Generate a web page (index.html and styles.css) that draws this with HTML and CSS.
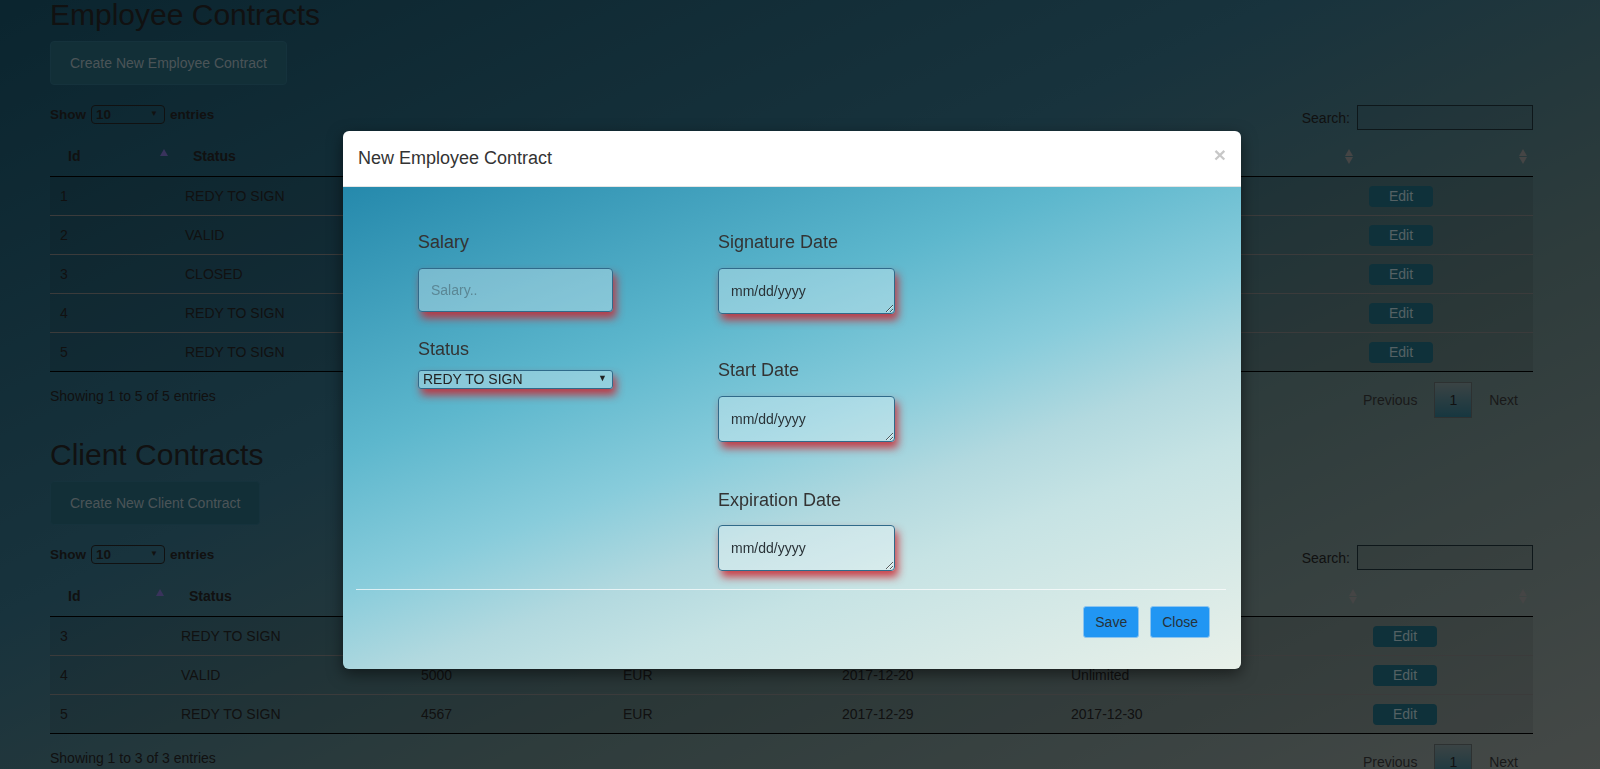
FILE: index.html
```html
<!DOCTYPE html>
<html lang="en">
<head>
<meta charset="utf-8">
<title>Contracts</title>
<link rel="stylesheet" href="styles.css">
</head>
<body>
<div class="page">
  <section class="block">
    <h2 class="block-title first">Employee Contracts</h2>
    <button class="btn-create" type="button">Create New Employee Contract</button>
    <div class="dt-top">
      <label class="dt-length">Show <span class="len-select"><select><option>10</option><option>25</option><option>50</option></select></span> entries</label>
      <label class="dt-filter">Search: <input type="search"></label>
    </div>
    <table class="dt">
      <colgroup><col style="width:125px"><col style="width:240px"><col style="width:200px"><col style="width:240px"><col style="width:245px"><col style="width:259px"><col style="width:174px"></colgroup>
      <thead>
        <tr><th class="sort-asc">Id</th><th class="sort-both">Status</th><th class="sort-both">Salary</th><th class="sort-both">Signature Date</th><th class="sort-both">Start Date</th><th class="sort-both">Expiration Date</th><th class="sort-both"></th></tr>
      </thead>
      <tbody>
        <tr><td>1</td><td>REDY TO SIGN</td><td>3000</td><td>2017-12-01</td><td>2017-12-05</td><td>2018-12-05</td><td><button class="btn-edit" type="button">Edit</button></td></tr>
        <tr><td>2</td><td>VALID</td><td>2500</td><td>2017-11-10</td><td>2017-11-15</td><td>Unlimited</td><td><button class="btn-edit" type="button">Edit</button></td></tr>
        <tr><td>3</td><td>CLOSED</td><td>1800</td><td>2017-01-02</td><td>2017-01-10</td><td>2017-10-10</td><td><button class="btn-edit" type="button">Edit</button></td></tr>
        <tr><td>4</td><td>REDY TO SIGN</td><td>4200</td><td>2017-12-18</td><td>2017-12-20</td><td>2018-06-20</td><td><button class="btn-edit" type="button">Edit</button></td></tr>
        <tr><td>5</td><td>REDY TO SIGN</td><td>3900</td><td>2017-12-27</td><td>2018-01-02</td><td>Unlimited</td><td><button class="btn-edit" type="button">Edit</button></td></tr>
      </tbody>
    </table>
    <div class="dt-bottom">
      <div class="dt-info">Showing 1 to 5 of 5 entries</div>
      <div class="dt-paginate"><a class="pg">Previous</a><a class="pg current">1</a><a class="pg">Next</a></div>
    </div>
  </section>

  <section class="block">
    <h2 class="block-title">Client Contracts</h2>
    <button class="btn-create" type="button">Create New Client Contract</button>
    <div class="dt-top">
      <label class="dt-length">Show <span class="len-select"><select><option>10</option><option>25</option><option>50</option></select></span> entries</label>
      <label class="dt-filter">Search: <input type="search"></label>
    </div>
    <table class="dt">
      <colgroup><col style="width:121px"><col style="width:240px"><col style="width:202px"><col style="width:219px"><col style="width:229px"><col style="width:302px"><col style="width:170px"></colgroup>
      <thead>
        <tr><th class="sort-asc">Id</th><th class="sort-both">Status</th><th class="sort-both">Amount</th><th class="sort-both">Currency</th><th class="sort-both">Start Date</th><th class="sort-both">Expiration Date</th><th class="sort-both"></th></tr>
      </thead>
      <tbody>
        <tr><td>3</td><td>REDY TO SIGN</td><td>1500</td><td>EUR</td><td>2017-12-10</td><td>2018-06-10</td><td><button class="btn-edit" type="button">Edit</button></td></tr>
        <tr><td>4</td><td>VALID</td><td>5000</td><td>EUR</td><td>2017-12-20</td><td>Unlimited</td><td><button class="btn-edit" type="button">Edit</button></td></tr>
        <tr><td>5</td><td>REDY TO SIGN</td><td>4567</td><td>EUR</td><td>2017-12-29</td><td>2017-12-30</td><td><button class="btn-edit" type="button">Edit</button></td></tr>
      </tbody>
    </table>
    <div class="dt-bottom">
      <div class="dt-info">Showing 1 to 3 of 3 entries</div>
      <div class="dt-paginate"><a class="pg">Previous</a><a class="pg current">1</a><a class="pg">Next</a></div>
    </div>
  </section>
</div>

<div class="backdrop"></div>

<div class="modal" role="dialog">
  <div class="modal-header">
    <h4 class="modal-title">New Employee Contract</h4>
    <button class="close" type="button">×</button>
  </div>
  <div class="modal-main">
    <div class="modal-body">
      <div class="form-col left">
        <label class="f-label">Salary</label>
        <input class="f-input" type="text" placeholder="Salary..">
        <label class="f-label status">Status</label>
        <span class="status-select"><select><option>REDY TO SIGN</option><option>VALID</option><option>CLOSED</option></select></span>
      </div>
      <div class="form-col right">
        <label class="f-label">Signature Date</label>
        <textarea class="f-date" placeholder="mm/dd/yyyy"></textarea>
        <label class="f-label start">Start Date</label>
        <textarea class="f-date" placeholder="mm/dd/yyyy"></textarea>
        <label class="f-label exp">Expiration Date</label>
        <textarea class="f-date" placeholder="mm/dd/yyyy"></textarea>
      </div>
    </div>
    <div class="modal-divider"></div>
    <div class="modal-footer">
      <button class="btn-blue" type="button">Save</button>
      <button class="btn-blue" type="button">Close</button>
    </div>
  </div>
</div>
</body>
</html>
```

FILE: styles.css
```css
* { box-sizing: border-box; }

html, body {
  margin: 0;
  height: 100%;
}

body {
  font-family: "Liberation Sans", Arial, sans-serif;
  font-size: 14px;
  line-height: 20px;
  color: #222;
  background: linear-gradient(to bottom right, #164a5e 0%, #30667a 40%, #5c7878 65%, #8a928e 100%);
  overflow: hidden;
}

.page {
  padding: 0 67px 0 50px;
}

.block-title {
  font-size: 30px;
  line-height: 33px;
  font-weight: normal;
  margin: 20px 0 10px;
  color: #222;
}

.block-title.first {
  margin-top: -2px;
}

.btn-create {
  display: inline-block;
  font-family: inherit;
  font-size: 14px;
  line-height: 20px;
  padding: 11px 19px;
  color: #96a8ae;
  background: #245e6e;
  border: 1px solid #2a6478;
  border-radius: 4px;
}

.dt-top {
  display: flex;
  justify-content: space-between;
  align-items: flex-start;
  margin-top: 20px;
}

.dt-length {
  display: flex;
  align-items: center;
  gap: 5px;
  height: 19px;
  font-weight: bold;
  font-size: 13.5px;
}

.len-select {
  position: relative;
  display: block;
  width: 74px;
  height: 19px;
}

.len-select select {
  appearance: none;
  -webkit-appearance: none;
  width: 100%;
  height: 100%;
  border: 1px solid #222;
  border-radius: 4px;
  background: transparent;
  font: bold 13.5px "Liberation Sans", Arial, sans-serif;
  color: #222;
  padding: 0 4px;
}

.len-select::after {
  content: "▼";
  position: absolute;
  right: 7px;
  top: 4px;
  font-size: 8px;
  line-height: 10px;
  color: #222;
  pointer-events: none;
}

.dt-filter {
  display: flex;
  align-items: center;
  gap: 7px;
}

.dt-filter input {
  -webkit-appearance: none;
  appearance: none;
  width: 176px;
  height: 25px;
  border: 1px solid #1c2e34;
  background: rgba(0, 0, 0, 0.04);
  margin: 0;
}

.dt {
  width: 100%;
  table-layout: fixed;
  border-collapse: separate;
  border-spacing: 0;
  margin-top: 6px;
}

.dt th {
  position: relative;
  text-align: left;
  font-weight: bold;
  padding: 10px 18px;
  line-height: 20px;
  border-bottom: 1px solid #000;
  white-space: nowrap;
  overflow: hidden;
}

.dt td {
  padding: 9px 10px;
  height: 38px;
  line-height: 20px;
  border-top: 1px solid #777;
  background: rgba(0, 0, 0, 0.08);
  white-space: nowrap;
  overflow: hidden;
}

.dt tbody tr + tr td {
  height: 39px;
}

.dt tbody tr:first-child td {
  border-top: none;
}

.dt tbody tr:last-child td {
  border-bottom: 1px solid #000;
}

.sort-asc::after {
  content: "";
  position: absolute;
  right: 7px;
  top: 13px;
  border-left: 4px solid transparent;
  border-right: 4px solid transparent;
  border-bottom: 7px solid #7266b8;
}

.sort-both::before,
.sort-both::after {
  content: "";
  position: absolute;
  right: 6px;
  border-left: 4px solid transparent;
  border-right: 4px solid transparent;
}

.sort-both::before {
  top: 13px;
  border-bottom: 7px solid #8a8a8a;
}

.sort-both::after {
  top: 21px;
  border-top: 7px solid #8a8a8a;
}

.btn-edit {
  display: block;
  margin: -1px 0;
  padding: 0 20px;
  height: 21px;
  line-height: 21px;
  font-family: inherit;
  font-size: 14px;
  color: #a8c2c8;
  background: #1e6274;
  border: none;
  border-radius: 4px;
}

.dt-bottom {
  display: flex;
  justify-content: space-between;
  align-items: flex-start;
}

.dt-info {
  padding-top: 14px;
}

.dt-paginate {
  display: flex;
  padding-top: 10px;
}

.pg {
  display: block;
  padding: 7px 14px;
  line-height: 20px;
  border: 1px solid transparent;
  margin-left: 2px;
  color: #333;
  text-decoration: none;
}

.pg.current {
  border-color: #5a6262;
  background: linear-gradient(to bottom, #76888a 0%, #2e6e80 100%);
  color: #222;
}

/* modal */
.backdrop {
  position: fixed;
  inset: 0;
  background: rgba(0, 0, 0, 0.5);
}

.modal {
  position: absolute;
  left: 343px;
  top: 131px;
  width: 898px;
  border-radius: 6px;
  overflow: hidden;
  box-shadow: 0 5px 15px rgba(0, 0, 0, 0.5);
}

.modal-header {
  display: flex;
  justify-content: space-between;
  align-items: flex-start;
  padding: 15px;
  background: #fff;
  border-bottom: 1px solid #e5e5e5;
}

.modal-title {
  margin: 0;
  font-size: 18px;
  line-height: 25px;
  font-weight: normal;
  color: #333;
}

.close {
  margin-top: -2px;
  padding: 0;
  border: 0;
  background: none;
  font: bold 21px/1 "Liberation Sans", Arial, sans-serif;
  color: #000;
  opacity: 0.22;
  text-shadow: 0 1px 0 #fff;
}

.modal-main {
  background: linear-gradient(160deg, #2589ac 0%, #5db7cd 33%, #88ccdb 50%, #b2d9df 62%, #c6e3e4 72%, #e8f0e9 100%);
}

.modal-body {
  display: flex;
  gap: 105px;
  padding: 45px 0 18px 75px;
}

.form-col {
  display: flex;
  flex-direction: column;
  align-items: flex-start;
}

.form-col.left { width: 195px; }
.form-col.right { width: 177px; }

.f-label {
  display: block;
  font-size: 18px;
  line-height: 20px;
  color: #333;
  margin-bottom: 16px;
}

.f-label.status {
  margin-top: 27px;
  margin-bottom: 10px;
}

.f-label.start {
  margin-top: 46px;
}

.f-label.exp {
  margin-top: 48px;
  margin-bottom: 15px;
}

.f-input,
.f-date,
.status-select select {
  border: 1px solid #2f6a8a;
  background: rgba(255, 255, 255, 0.3);
  box-shadow: 3px 6px 9px rgba(205, 35, 45, 0.85);
  font-family: "Liberation Sans", Arial, sans-serif;
  font-size: 14px;
  color: #2a3338;
}

.f-input {
  width: 195px;
  height: 44px;
  padding: 0 12px;
  border-radius: 4px;
  margin: 0;
}

.f-input::placeholder {
  color: #5b8795;
  opacity: 1;
}

.f-date {
  display: block;
  width: 177px;
  height: 46px;
  padding: 12px 12px;
  line-height: 20px;
  border-radius: 4px;
  resize: both;
  overflow: hidden;
  margin: 0;
}

.f-date::placeholder {
  color: #2a3338;
  opacity: 1;
}

.status-select {
  position: relative;
  display: block;
  width: 195px;
  height: 19px;
}

.status-select select {
  appearance: none;
  -webkit-appearance: none;
  width: 100%;
  height: 100%;
  border-radius: 3px;
  padding: 0 4px;
  line-height: 17px;
  color: #222;
  margin: 0;
}

.status-select::after {
  content: "▼";
  position: absolute;
  right: 6px;
  top: 4px;
  font-size: 9px;
  line-height: 10px;
  color: #222;
  pointer-events: none;
}

.modal-divider {
  height: 1px;
  margin: 0 15px 0 13px;
  background: rgba(255, 255, 255, 0.7);
}

.modal-footer {
  display: flex;
  justify-content: flex-end;
  gap: 11px;
  padding: 16px 31px 31px;
}

.btn-blue {
  height: 32px;
  padding: 0 11px;
  line-height: 30px;
  font-family: "Liberation Sans", Arial, sans-serif;
  font-size: 14px;
  color: #26323a;
  background: #2196f3;
  border: 1px solid #8cc4ee;
  border-radius: 3px;
}
```
